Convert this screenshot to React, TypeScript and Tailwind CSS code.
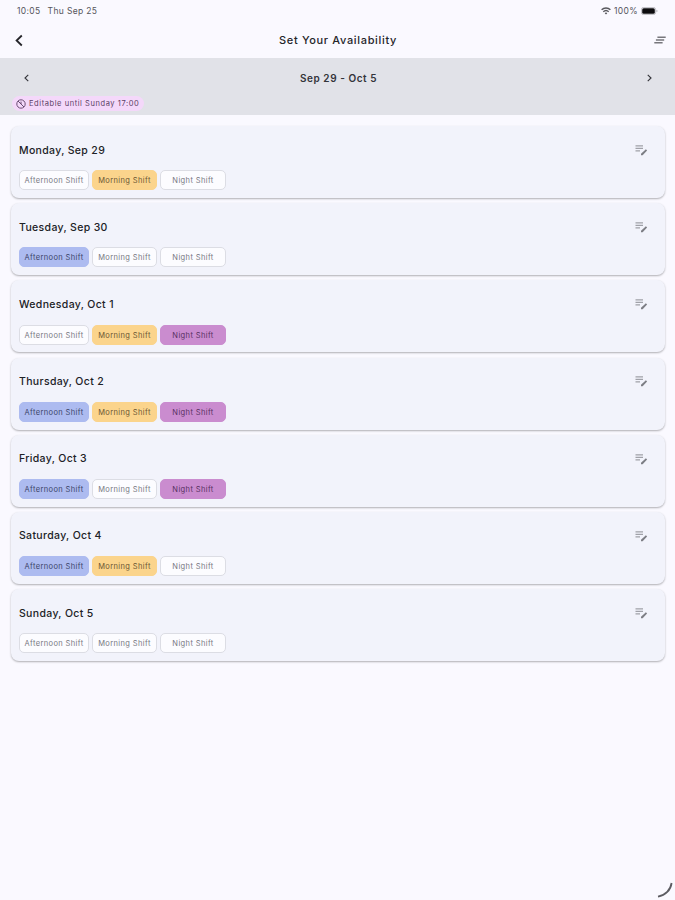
import clsx from "clsx";

type ShiftKey = "afternoon" | "morning" | "night";

const SHIFTS: { key: ShiftKey; label: string; size: string; active: string }[] = [
  { key: "afternoon", label: "Afternoon Shift", size: "w-[70px]", active: "bg-[#adbbf0] border-[#adbbf0] text-[#3b4468]" },
  { key: "morning", label: "Morning Shift", size: "w-[65px]", active: "bg-[#fbd48c] border-[#fbd48c] text-[#6b5433]" },
  { key: "night", label: "Night Shift", size: "w-[66px]", active: "bg-[#ca8ccf] border-[#ca8ccf] text-[#57305f]" },
];

const DAYS: { label: string; selected: ShiftKey[] }[] = [
  { label: "Monday, Sep 29", selected: ["morning"] },
  { label: "Tuesday, Sep 30", selected: ["afternoon"] },
  { label: "Wednesday, Oct 1", selected: ["morning", "night"] },
  { label: "Thursday, Oct 2", selected: ["afternoon", "morning", "night"] },
  { label: "Friday, Oct 3", selected: ["afternoon", "night"] },
  { label: "Saturday, Oct 4", selected: ["afternoon", "morning"] },
  { label: "Sunday, Oct 5", selected: [] },
];

function Chevron({ className, flip }: { className: string; flip?: boolean }) {
  return (
    <svg viewBox="0 0 8 12" fill="none" stroke="currentColor" className={clsx(className, flip && "-scale-x-100")}>
      <path d="M6.8 1 1.6 6l5.2 5" strokeWidth="1.8" />
    </svg>
  );
}

function StatusBar() {
  return (
    <div className="flex h-[22px] items-center justify-between pl-[17px] pr-[17px] text-[8.5px] text-[#55555c]">
      <div className="flex gap-[7px] tracking-[0.35px]">
        <span>10:05</span>
        <span>Thu Sep 25</span>
      </div>
      <div className="flex items-center">
        <svg viewBox="0 0 10 8" className="mr-[3px] h-[8px] w-[10px]" fill="none" stroke="#58585d" strokeWidth="1.4">
          <path d="M.6 2.8a6.3 6.3 0 0 1 8.8 0M2.3 4.7a3.9 3.9 0 0 1 5.4 0" />
          <path d="M3.7 6.1a1.9 1.9 0 0 1 2.6 0L5 7.4z" fill="#48484d" stroke="none" />
        </svg>
        <span className="tracking-[0.35px]">100%</span>
        <svg viewBox="0 0 17 8" className="ml-[3px] h-[8px] w-[17px]">
          <rect x=".4" y=".4" width="14.2" height="7.2" rx="2.2" fill="none" stroke="#a5a5aa" strokeWidth=".7" />
          <rect x="1.2" y="1.2" width="12.6" height="5.6" rx="1.5" fill="#0c0c0e" />
          <path d="M15.5 2.8v2.4q1-.4 1-1.2t-1-1.2" fill="#a5a5aa" />
        </svg>
      </div>
    </div>
  );
}

function Header() {
  return (
    <div className="flex h-[36px] items-center justify-between pl-[15px] pr-[9px] text-[#25252a]">
      <Chevron className="h-[13px] w-[8px]" />
      <h1 className="pr-px text-[11px] font-medium tracking-[0.66px]">Set Your Availability</h1>
      <svg viewBox="0 0 12 8" className="h-[8px] w-[12px]" stroke="#77777c" strokeWidth="1.5">
        <path d="M3.4 1.2h8.3M1.9 3.9h8.3M.3 6.7h8.3" />
      </svg>
    </div>
  );
}

function WeekBar() {
  return (
    <div className="h-[57px] bg-[#e1e2e8]">
      <div className="flex h-[38px] items-center justify-between pl-[24px] pr-[23px] pt-[2px] text-[#33343a]">
        <Chevron className="h-[8px] w-[5px]" />
        <span className="pl-px text-[10px] font-semibold tracking-[0.55px]">Sep 29 - Oct 5</span>
        <Chevron className="h-[8px] w-[5px]" flip />
      </div>
      <div className="ml-[12px] flex h-[15px] w-[132px] items-center rounded-full bg-[#f4d8fa] pl-[4px] text-[#5b3f66]">
        <svg viewBox="0 0 10 10" className="mr-[3px] h-[10px] w-[10px]" fill="none" stroke="currentColor" strokeWidth=".9">
          <circle cx="5" cy="5" r="4.2" />
          <path d="M2 2l6 6M5 2.6V5" />
        </svg>
        <span className="whitespace-nowrap text-[7.5px] tracking-[0.57px]">Editable until Sunday 17:00</span>
      </div>
    </div>
  );
}

function EditNote() {
  return (
    <svg viewBox="0 0 14 12" className="mb-px h-[12px] w-[14px]" fill="none">
      <path d="M1.5 1.8h7.5M1.5 4.3h7.5M1.5 6.8h4.5" stroke="#a0a1a8" strokeWidth="1.2" />
      <path d="M7 11.3V9.8l4.9-4.6 1.2 1.3-4.5 4.8z" fill="#7c7d84" />
    </svg>
  );
}

function DayCard({ label, selected }: { label: string; selected: ShiftKey[] }) {
  return (
    <div className="h-[72px] rounded-[8px] bg-[#f2f3fb] pl-[8px] pr-[17px] shadow-[0_1px_2px_rgba(0,0,0,0.3)]">
      <div className="flex h-[44.3px] items-center justify-between pt-[4.5px]">
        <h2 className="text-[10.5px] font-medium tracking-[0.34px] text-[#202126]">{label}</h2>
        <EditNote />
      </div>
      <div className="flex gap-[3px]">
        {SHIFTS.map((shift) => (
          <span
            key={shift.key}
            className={clsx(
              "flex h-[20px] items-center justify-center whitespace-nowrap rounded-[5px] border pt-px text-[7.5px] tracking-[0.38px]",
              shift.size,
              selected.includes(shift.key) ? shift.active : "border-[#dcdde4] bg-[#fcfcff] text-[#77787f]",
            )}
          >
            {shift.label}
          </span>
        ))}
      </div>
    </div>
  );
}

export default function App() {
  return (
    <div className="relative h-[900px] w-[675px] overflow-hidden bg-[#faf9ff] font-['Inter',sans-serif]">
      <StatusBar />
      <Header />
      <WeekBar />
      <div className="flex flex-col gap-[5.2px] pl-[11px] pr-[10px] pt-[11px]">
        {DAYS.map((day) => (
          <DayCard key={day.label} {...day} />
        ))}
      </div>
      {/* corner pull handle */}
      <svg viewBox="0 0 16 16" className="absolute bottom-[2px] right-[2px] h-[16px] w-[16px]" fill="none">
        <path d="M14.6 1C13.6 8 8.5 13.4 1 14.6" stroke="#5c5c62" strokeWidth="1.8" />
      </svg>
    </div>
  );
}
